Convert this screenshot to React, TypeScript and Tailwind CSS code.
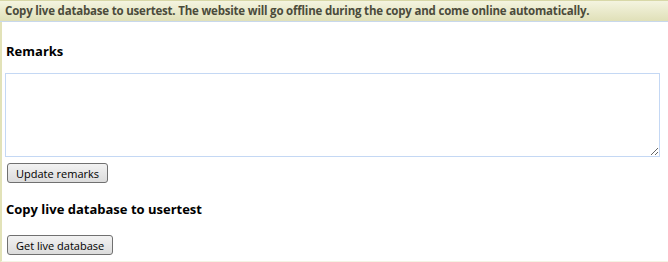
import React from "react";

const font = { fontFamily: '"Open Sans", "Noto Sans", "Liberation Sans", sans-serif' };

export default function App() {
  return (
    <div className="w-[668px] h-[262px] bg-white overflow-hidden flex flex-col" style={font}>
      <div className="h-[22px] shrink-0 border-t border-[#d8d8a8] border-b border-b-[#c8d8ec] bg-gradient-to-b from-[#f4f4e0] to-[#e0e0b8] flex items-center px-[5px]">
        <span className="text-[11.5px] font-bold text-[#4b4b3b] tracking-[-0.2px] whitespace-nowrap">
          Copy live database to usertest. The website will go offline during the copy and come online automatically.
        </span>
      </div>
      <div className="flex-1 border-l-2 border-[#e2e2b8] border-b border-b-[#f4f4e4] pl-[3px] pr-[8px] flex flex-col">
        <h2 className="text-[13px] font-bold text-black mt-[20px] leading-[18px] h-[18px] pl-[1px]">Remarks</h2>
        <textarea className="block mt-[13px] h-[84px] w-full border border-[#c4d8f4] resize-y outline-none shrink-0" />
        <div className="mt-[6px] pl-[2px] flex">
          <button className="h-[20px] px-[8px] text-[11px] text-black border border-[#707070] rounded-[3px] bg-gradient-to-b from-[#f2f2f2] to-[#dcdcdc] leading-none">
            Update remarks
          </button>
        </div>
        <h2 className="text-[13px] font-bold text-black mt-[17px] leading-[18px] h-[18px] pl-[1px]">Copy live database to usertest</h2>
        <div className="mt-[17px] pl-[2px] flex">
          <button className="h-[20px] px-[8px] text-[11px] text-black border border-[#707070] rounded-[3px] bg-gradient-to-b from-[#f2f2f2] to-[#dcdcdc] leading-none">
            Get live database
          </button>
        </div>
      </div>
    </div>
  );
}
